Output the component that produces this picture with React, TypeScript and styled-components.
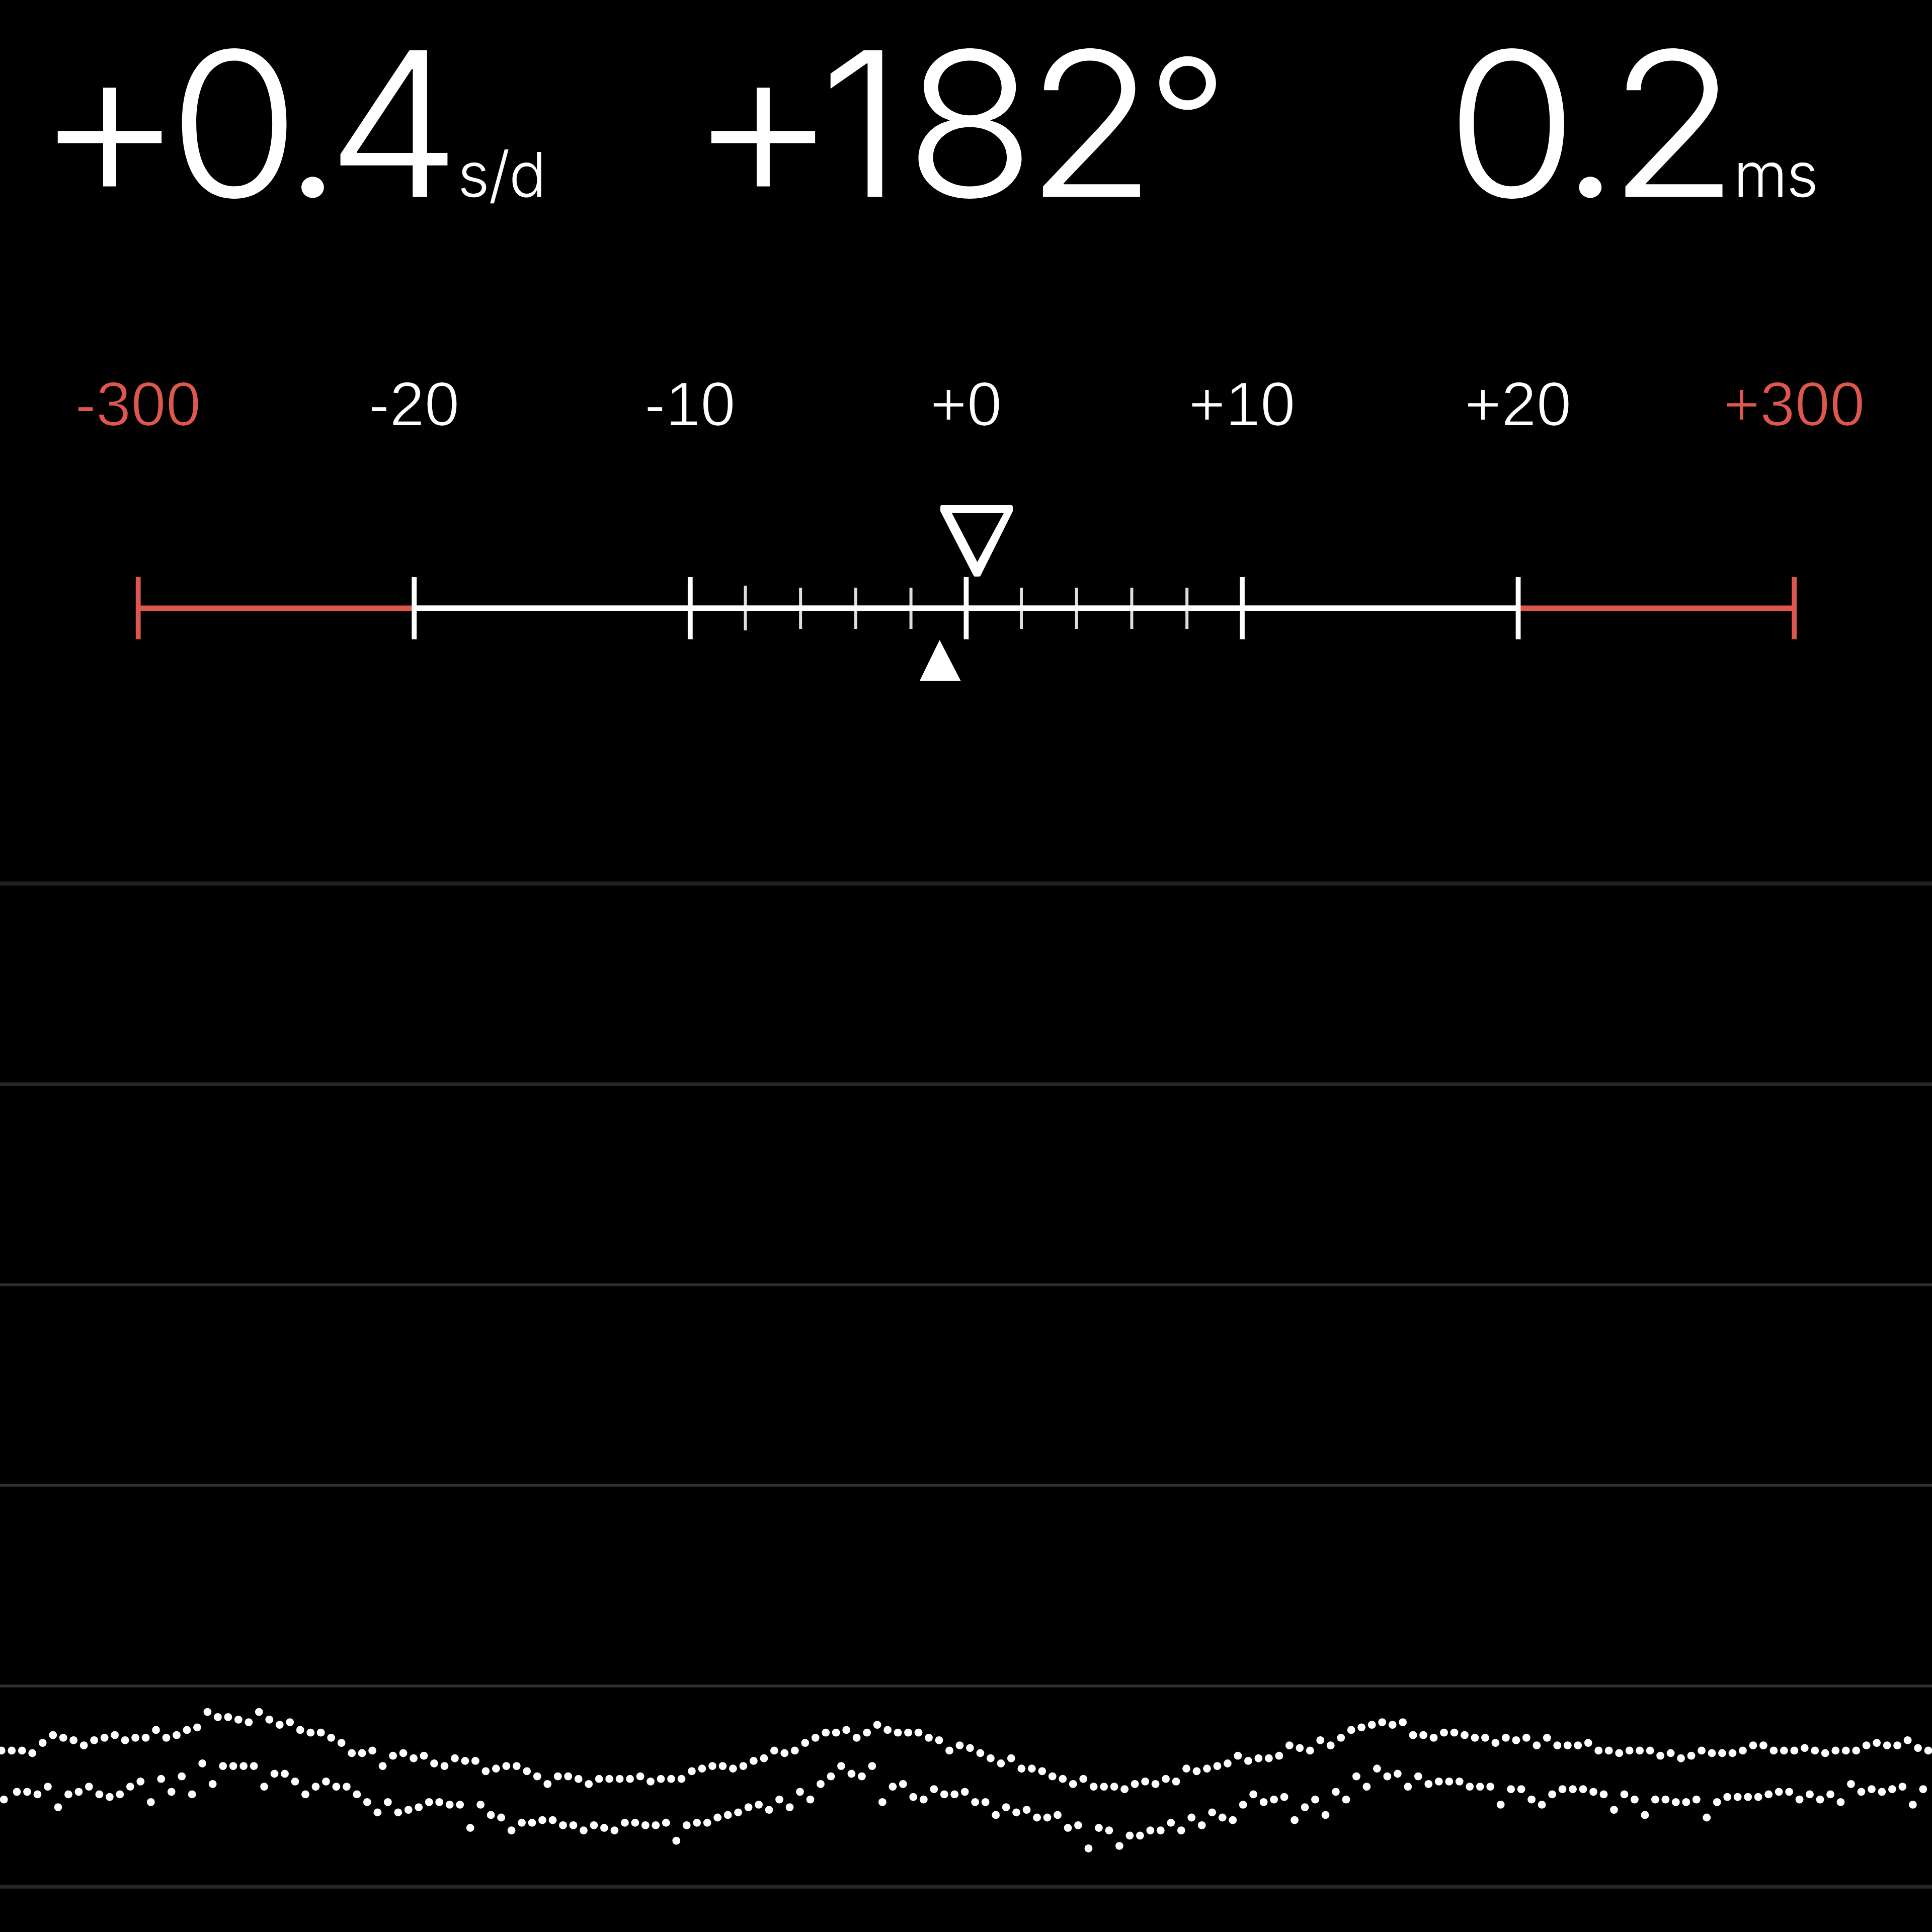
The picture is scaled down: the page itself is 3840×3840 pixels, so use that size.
import styled, { createGlobalStyle } from "styled-components";

// Each glyph carries the spacing that follows it, in pixels.
type Glyph = [text: string, spacing: number];
type Reading = { glyphs: Glyph[]; unit?: string; unitGap?: number };

const readings: Reading[] = [
  {
    glyphs: [["+", -10], ["0", -33], [".", -30], ["4", 0]],
    unit: "s/d",
    unitGap: 41,
  },
  { glyphs: [["+", -16], ["1", 4], ["8", -18], ["2", -18], ["°", 0]] },
  { glyphs: [["0", -33], [".", -23], ["2", 0]], unit: "ms", unitGap: 22 },
];

const scaleLabels = ["-300", "-20", "-10", "+0", "+10", "+20", "+300"];

const RED = "#dd574d";
const CELL = 5.12;
const COLUMN = 3840 / 7;

// One value per beat, in cells below the highest point of the trace.
const tick = [
  15, 15, 15, 16, 12, 9, 10, 11, 13, 11, 10, 9, 11, 10, 10, 7, 10, 9, 7, 6,
  0, 2, 2, 3, 4, 0, 3, 5, 4, 7, 8, 8, 10, 12, 16, 16, 15, 21, 17, 16,
  18, 17, 20, 21, 18, 19, 19, 23, 22, 21, 21, 23, 25, 28, 25, 25, 26, 28, 26, 26,
  26, 26, 25, 27, 26, 26, 26, 23, 22, 21, 21, 22, 21, 19, 18, 15, 16, 15, 12, 10,
  8, 8, 7, 10, 8, 5, 7, 8, 8, 8, 10, 11, 15, 13, 14, 16, 18, 20, 18, 22,
  22, 23, 25, 26, 28, 26, 29, 29, 29, 30, 28, 27, 28, 26, 27, 22, 23, 22, 21, 20,
  17, 19, 18, 18, 17, 13, 14, 15, 11, 13, 10, 7, 6, 5, 4, 5, 4, 9, 9, 10,
  8, 8, 9, 10, 10, 12, 10, 11, 10, 13, 10, 13, 13, 13, 12, 15, 15, 16, 15, 15,
  15, 17, 16, 18, 17, 15, 16, 16, 16, 15, 13, 13, 15, 15, 15, 14, 15, 16, 15, 15,
  15, 13, 12, 13, 13, 11, 14, 15,
];

const tock = [
  34, 31, 31, 32, 29, 37, 32, 31, 29, 32, 33, 32, 29, 27, 35, 26, 31, 25, 32, 20,
  28, 21, 21, 21, 21, 29, 24, 24, 27, 32, 29, 27, 29, 29, 32, 35, 39, 35, 39, 38,
  37, 35, 35, 36, 36, 45, 36, 40, 41, 46, 43, 43, 42, 42, 44, 44, 46, 44, 45, 46,
  43, 43, 44, 44, 43, 50, 44, 43, 43, 41, 40, 39, 37, 36, 38, 34, 37, 31, 34, 28,
  25, 21, 24, 25, 21, 35, 29, 28, 33, 34, 30, 32, 32, 31, 35, 35, 40, 37, 39, 38,
  41, 41, 40, 45, 44, 53, 45, 46, 52, 48, 48, 46, 46, 43, 46, 41, 44, 39, 41, 42,
  36, 32, 35, 34, 33, 42, 37, 34, 40, 31, 34, 25, 29, 22, 25, 24, 29, 25, 28, 27,
  27, 27, 29, 29, 29, 36, 30, 30, 34, 36, 32, 30, 30, 30, 31, 32, 38, 32, 34, 40,
  34, 34, 35, 35, 34, 41, 35, 33, 33, 33, 33, 32, 31, 31, 34, 32, 34, 32, 35, 28,
  31, 30, 31, 30, 29, 36, 30,
];

const gridLines = [
  { y: 1756, size: 8, color: "#212121" },
  { y: 2155, size: 7, color: "#262626" },
  { y: 2553.5, size: 5.5, color: "#2e2e2e" },
  { y: 2952, size: 5.5, color: "#303030" },
  { y: 3351, size: 5.5, color: "#303030" },
  { y: 3750, size: 7.5, color: "#262626" },
];

function Gauge() {
  const center = (index: number) => COLUMN * (index + 0.5);
  const minor = [-4, -3, -2, -1, 1, 2, 3, 4];

  return (
    <GaugeDrawing viewBox="0 960 3840 440">
      {minor.map((step) => {
        const tall = step === -4;
        return (
          <rect
            key={step}
            x={1920 + (step * COLUMN) / 5 - 2.7}
            y={tall ? 1164 : 1168}
            width={6}
            height={tall ? 89 : 82}
            fill="#dedede"
          />
        );
      })}
      <rect x={center(0)} y={1203.5} width={COLUMN} height={11} fill={RED} />
      <rect x={center(5)} y={1203.5} width={COLUMN} height={11} fill={RED} />
      <rect x={center(1)} y={1203.3} width={COLUMN * 4} height={10.8} fill="#fff" />
      {scaleLabels.map((label, index) => (
        <rect
          key={label}
          x={center(index) - 4.5}
          y={1147}
          width={9.8}
          height={123.5}
          fill={index === 0 || index === 6 ? RED : "#fff"}
        />
      ))}
      <path
        d="M1872 1004H2010Q2013 1004 2013 1008V1016L1949 1144Q1948 1146 1946 1146H1938Q1936 1146 1935 1144L1869 1016V1008Q1869 1004 1872 1004ZM1892 1020L1942.5 1117L1995 1020Z"
        fill="#fff"
        fillRule="evenodd"
      />
      <path d="M1867.5 1272L1909.5 1353H1828Z" fill="#fff" />
    </GaugeDrawing>
  );
}

function Trace({ values, shift }: { values: number[]; shift: number }) {
  return (
    <g fill="#fff">
      {values.map((value, index) => (
        <circle
          key={index}
          cx={(index * 4 + shift) * CELL}
          cy={3402.6 + value * CELL}
          r={7.9}
        />
      ))}
    </g>
  );
}

export default function App() {
  return (
    <Screen>
      <GlobalStyle />
      <Readouts>
        {readings.map(({ glyphs, unit, unitGap = 0 }, index) => (
          <Readout key={index}>
            <Value>
              {glyphs.map(([text, spacing], position) => {
                const Part = text === "°" ? Degree : text === "+" ? Sign : Digit;
                return (
                  <Part key={position} $spacing={spacing}>
                    {text}
                  </Part>
                );
              })}
            </Value>
            {unit && <Unit $gap={unitGap}>{unit}</Unit>}
          </Readout>
        ))}
      </Readouts>
      <ScaleLabels>
        {scaleLabels.map((label, index) => (
          <ScaleLabel key={label} $limit={index === 0 || index === 6}>
            {label}
          </ScaleLabel>
        ))}
      </ScaleLabels>
      <Gauge />
      <Chart viewBox="0 1400 3840 2440">
        {gridLines.map(({ y, size, color }) => (
          <rect key={y} x={0} y={y - size / 2} width={3840} height={size} fill={color} />
        ))}
        <Trace values={tick} shift={0.55} />
        {/* the oldest beat is already scrolling out on the left */}
        <Trace values={tock.slice(0, 1)} shift={1.5} />
        <Trace values={tock.slice(1)} shift={6.55} />
      </Chart>
    </Screen>
  );
}

const GlobalStyle = createGlobalStyle`
  body {
    margin: 0;
    background: #000;
  }
`;

const Screen = styled.main`
  display: flex;
  flex-direction: column;
  width: 3840px;
  height: 3840px;
  overflow: hidden;
  background: #000;
  color: #fff;
`;

const Readouts = styled.header`
  display: grid;
  grid-template-columns: 1299px 1499px 1fr;
  box-sizing: border-box;
  height: 700px;
  padding-left: 76px;
  font-family: Inter, "Liberation Sans", sans-serif;
  font-weight: 300;
  font-feature-settings: "calt" 0;
`;

const Readout = styled.div`
  display: flex;
  align-items: baseline;
  height: 480px;
  line-height: 491px;
  white-space: nowrap;
`;

const Value = styled.span`
  font-size: 400px;
  transform: scaleX(1.06);
  transform-origin: left;
`;

const Digit = styled.span<{ $spacing: number }>`
  letter-spacing: ${({ $spacing }) => $spacing}px;
`;

/* A wide, low plus; the black outline thins its bars. */
const Sign = styled(Digit)`
  margin-left: 14px;
  font-family: "Liberation Sans", Arial, sans-serif;
  font-size: 411px;
  line-height: 0;
  vertical-align: -18px;
  -webkit-text-stroke: 5px #000;
`;

const Degree = styled(Digit)`
  font-size: 335px;
  line-height: 0;
  vertical-align: 33px;
`;

const Unit = styled.span<{ $gap: number }>`
  margin-left: ${({ $gap }) => $gap}px;
  font-size: 123px;
  letter-spacing: -2px;
`;

const ScaleLabels = styled.div`
  display: grid;
  grid-template-columns: repeat(7, 1fr);
  height: 260px;
  font-family: "Liberation Sans", Arial, sans-serif;
  font-size: 125px;
  line-height: 206px;
  text-align: center;
`;

/* The black outline eats into the glyphs to give a light weight. */
const ScaleLabel = styled.span<{ $limit: boolean }>`
  color: ${({ $limit }) => ($limit ? RED : "#fff")};
  -webkit-text-stroke: 2px #000;
`;

const GaugeDrawing = styled.svg`
  display: block;
  width: 100%;
  height: 440px;
`;

const Chart = styled.svg`
  display: block;
  width: 100%;
  height: 2440px;
`;
